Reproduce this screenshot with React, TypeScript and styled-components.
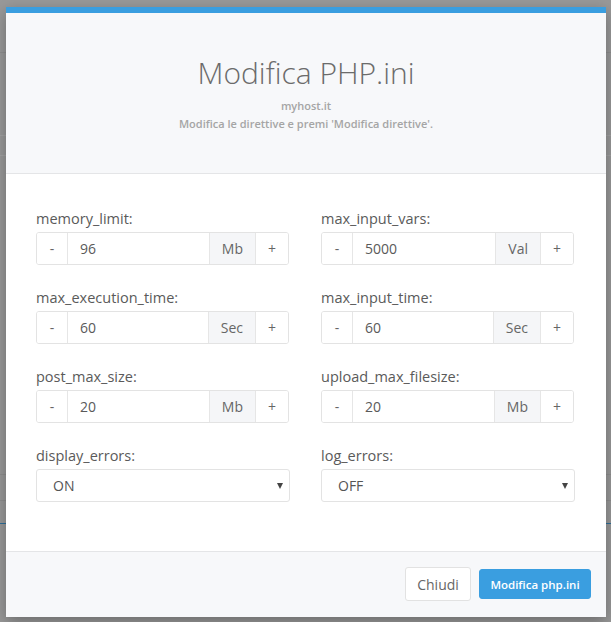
import React from "react";
import styled, { createGlobalStyle } from "styled-components";

const GlobalStyle = createGlobalStyle`
  html, body { margin: 0; padding: 0; }
  body {
    background: #999;
    font-family: "Open Sans", "Liberation Sans", sans-serif;
  }
  * { box-sizing: border-box; }
`;

const Backdrop = styled.div`
  min-height: 622px;
  padding: 7px 0 0 6px;
  background:
    linear-gradient(#8f8f8f, #8f8f8f) 0 52px / 100% 1px no-repeat,
    linear-gradient(#a3a3a3, #a3a3a3) 0 135px / 100% 1px no-repeat,
    linear-gradient(#a3a3a3, #a3a3a3) 0 155px / 100% 1px no-repeat,
    linear-gradient(#8f8f8f, #8f8f8f) 0 474px / 100% 1px no-repeat,
    linear-gradient(#8f8f8f, #8f8f8f) 0 500px / 100% 1px no-repeat,
    linear-gradient(#2f6f9a, #2f6f9a) 0 523px / 100% 1px no-repeat,
    #999;
`;

const Modal = styled.div`
  width: 600px;
  background: #fff;
  border-top: 6px solid #3a9ee0;
  box-shadow: 0 5px 15px rgba(0, 0, 0, 0.3);
`;

const Header = styled.div`
  background: #f7f8fa;
  border-bottom: 1px solid #e4e5e7;
  padding: 43px 0 40px;
  text-align: center;
`;

const Title = styled.h3`
  margin: 0 0 8px;
  font-size: 30px;
  font-weight: 300;
  line-height: 33px;
  color: #6b6b6b;
`;

const Sub = styled.div`
  font-size: 11px;
  font-weight: 600;
  line-height: 18px;
  color: #a5a5a5;
`;

const Body = styled.div`
  padding: 35px 32px 49px 30px;
  display: grid;
  grid-template-columns: 253px 253px;
  column-gap: 32px;
  row-gap: 23px;
`;

const Field = styled.div`
  display: flex;
  flex-direction: column;
`;

const Label = styled.label`
  font-size: 14.5px;
  line-height: 20px;
  color: #5a5a5a;
  margin-bottom: 3px;
`;

const Group = styled.div`
  display: flex;
  height: 33px;
  border: 1px solid #e3e3e3;
  border-radius: 3px;
  overflow: hidden;
  font-size: 14px;
  color: #666;
`;

const Addon = styled.div<{ $w?: number; $shade?: boolean }>`
  flex: 0 0 auto;
  width: ${(p) => (p.$w ? `${p.$w}px` : "auto")};
  padding: ${(p) => (p.$w ? "0" : "0 12px")};
  display: flex;
  align-items: center;
  justify-content: center;
  background: ${(p) => (p.$shade ? "#f5f6f8" : "#fff")};
  border-left: 1px solid #e6e6e6;
  &:first-child { border-left: none; }
`;

const Value = styled.div`
  flex: 1;
  display: flex;
  align-items: center;
  padding-left: 12px;
  border-left: 1px solid #e6e6e6;
  color: #5a5a5a;
`;

const SelectBox = styled.div`
  position: relative;
  height: 33px;
  width: 254px;
  border: 1px solid #e3e3e3;
  border-radius: 3px;
  display: flex;
  align-items: center;
  padding-left: 16px;
  font-size: 14px;
  color: #555;
  background: #fff;
`;

const Arrow = styled.span`
  position: absolute;
  right: 6px;
  top: 13px;
  width: 0;
  height: 0;
  border-left: 3.5px solid transparent;
  border-right: 3.5px solid transparent;
  border-top: 6px solid #444;
`;

const Footer = styled.div`
  background: #f7f8fa;
  border-top: 1px solid #e4e5e7;
  padding: 15px 15px 16px;
  display: flex;
  justify-content: flex-end;
  align-items: center;
  gap: 8px;
`;

const Button = styled.button<{ $primary?: boolean }>`
  font-family: "Open Sans", "Liberation Sans", sans-serif;
  border-radius: 3px;
  cursor: pointer;
  ${(p) =>
    p.$primary
      ? `
    height: 30px;
    width: 112px;
    background: #3a9ee0;
    border: 1px solid #3a9ee0;
    color: #fff;
    font-size: 11.5px;
    font-weight: 600;
  `
      : `
    height: 34px;
    width: 66px;
    background: #fff;
    border: 1px solid #e2e2e2;
    color: #666;
    font-size: 14px;
    font-weight: 400;
  `}
`;

type Num = { kind: "num"; name: string; value: string; unit: string };
type Sel = { kind: "sel"; name: string; value: string };

const fields: (Num | Sel)[] = [
  { kind: "num", name: "memory_limit", value: "96", unit: "Mb" },
  { kind: "num", name: "max_input_vars", value: "5000", unit: "Val" },
  { kind: "num", name: "max_execution_time", value: "60", unit: "Sec" },
  { kind: "num", name: "max_input_time", value: "60", unit: "Sec" },
  { kind: "num", name: "post_max_size", value: "20", unit: "Mb" },
  { kind: "num", name: "upload_max_filesize", value: "20", unit: "Mb" },
  { kind: "sel", name: "display_errors", value: "ON" },
  { kind: "sel", name: "log_errors", value: "OFF" },
];

export default function App() {
  return (
    <>
      <GlobalStyle />
      <Backdrop>
        <Modal>
          <Header>
            <Title>Modifica PHP.ini</Title>
            <Sub>myhost.it</Sub>
            <Sub>Modifica le direttive e premi 'Modifica direttive'.</Sub>
          </Header>
          <Body>
            {fields.map((f) => (
              <Field key={f.name}>
                <Label>{f.name}:</Label>
                {f.kind === "num" ? (
                  <Group>
                    <Addon $w={30}>-</Addon>
                    <Value>{f.value}</Value>
                    <Addon $shade>{f.unit}</Addon>
                    <Addon $w={33}>+</Addon>
                  </Group>
                ) : (
                  <SelectBox>
                    {f.value}
                    <Arrow />
                  </SelectBox>
                )}
              </Field>
            ))}
          </Body>
          <Footer>
            <Button>Chiudi</Button>
            <Button $primary>Modifica php.ini</Button>
          </Footer>
        </Modal>
      </Backdrop>
    </>
  );
}
